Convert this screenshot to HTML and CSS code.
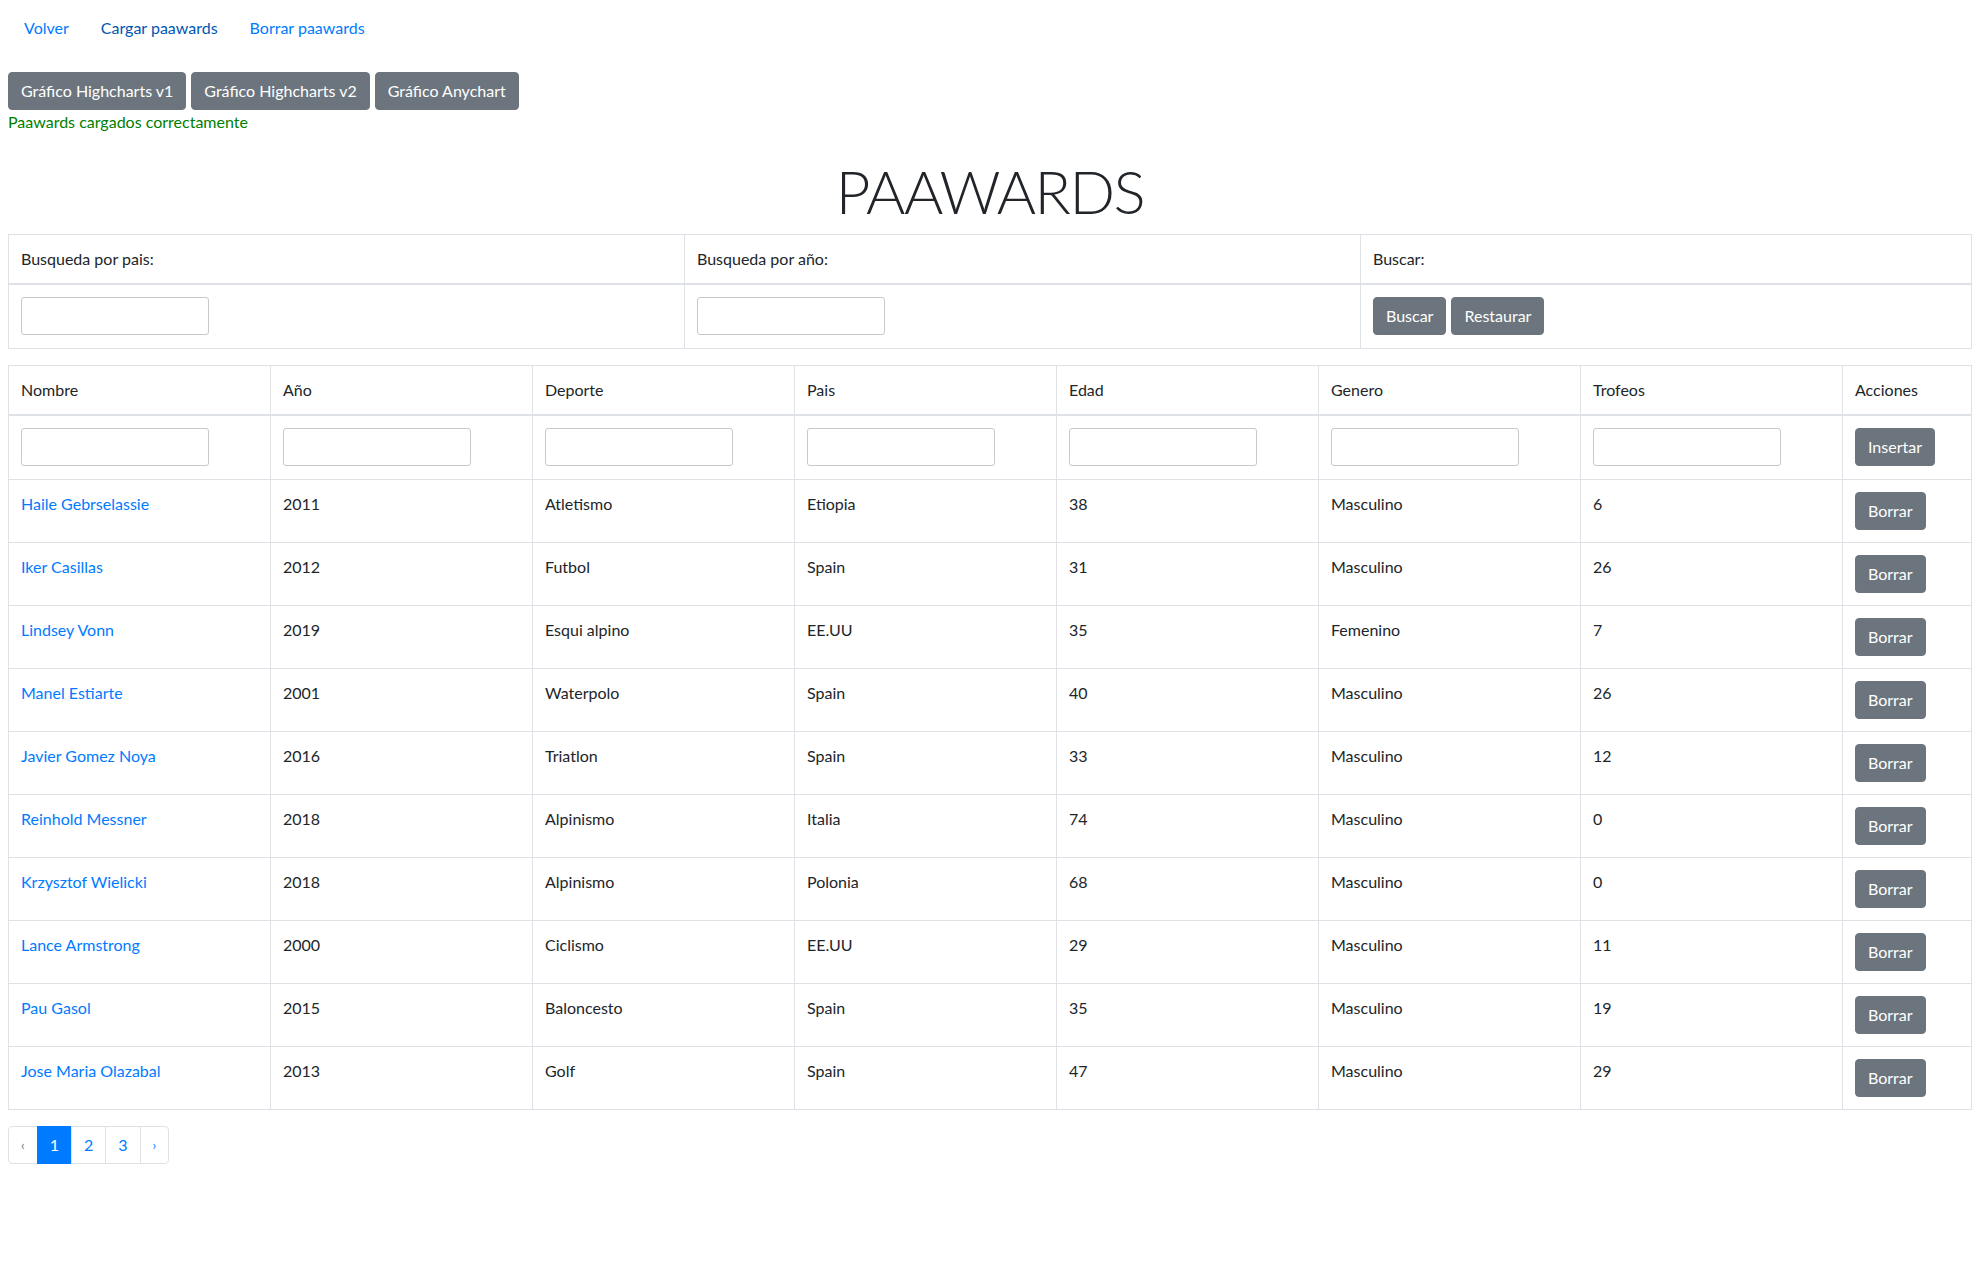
FILE: index.html
```html
<!DOCTYPE html>
<html lang="es">
<head>
<meta charset="utf-8">
<title>Paawards</title>
<link rel="stylesheet" href="styles.css">
</head>
<body>
<ul class="nav">
  <li><a class="nav-link" href="#">Volver</a></li>
  <li><a class="nav-link visited" href="#">Cargar paawards</a></li>
  <li><a class="nav-link" href="#">Borrar paawards</a></li>
</ul>
<div class="charts">
  <button class="btn">Gráfico Highcharts v1</button>
  <button class="btn">Gráfico Highcharts v2</button>
  <button class="btn">Gráfico Anychart</button>
</div>
<p class="msg">Paawards cargados correctamente</p>
<h1 class="title">PAAWARDS</h1>

<table class="tbl search">
  <colgroup><col class="sc1"><col class="sc2"><col></colgroup>
  <thead>
    <tr><th>Busqueda por pais:</th><th>Busqueda por año:</th><th>Buscar:</th></tr>
  </thead>
  <tbody>
    <tr class="input-row">
      <td><input class="inp" type="text"></td>
      <td><input class="inp" type="text"></td>
      <td><div class="btn-row"><button class="btn">Buscar</button><button class="btn">Restaurar</button></div></td>
    </tr>
  </tbody>
</table>

<table class="tbl data">
  <colgroup>
    <col class="dc"><col class="dc"><col class="dc"><col class="dc"><col class="dc"><col class="dc"><col class="dc"><col>
  </colgroup>
  <thead>
    <tr><th>Nombre</th><th>Año</th><th>Deporte</th><th>Pais</th><th>Edad</th><th>Genero</th><th>Trofeos</th><th>Acciones</th></tr>
  </thead>
  <tbody>
    <tr class="input-row">
      <td><input class="inp" type="text"></td>
      <td><input class="inp" type="text"></td>
      <td><input class="inp" type="text"></td>
      <td><input class="inp" type="text"></td>
      <td><input class="inp" type="text"></td>
      <td><input class="inp" type="text"></td>
      <td><input class="inp" type="text"></td>
      <td><button class="btn">Insertar</button></td>
    </tr>
    <tr><td><a href="#">Haile Gebrselassie</a></td><td>2011</td><td>Atletismo</td><td>Etiopia</td><td>38</td><td>Masculino</td><td>6</td><td><button class="btn">Borrar</button></td></tr>
    <tr><td><a href="#">Iker Casillas</a></td><td>2012</td><td>Futbol</td><td>Spain</td><td>31</td><td>Masculino</td><td>26</td><td><button class="btn">Borrar</button></td></tr>
    <tr><td><a href="#">Lindsey Vonn</a></td><td>2019</td><td>Esqui alpino</td><td>EE.UU</td><td>35</td><td>Femenino</td><td>7</td><td><button class="btn">Borrar</button></td></tr>
    <tr><td><a href="#">Manel Estiarte</a></td><td>2001</td><td>Waterpolo</td><td>Spain</td><td>40</td><td>Masculino</td><td>26</td><td><button class="btn">Borrar</button></td></tr>
    <tr><td><a href="#">Javier Gomez Noya</a></td><td>2016</td><td>Triatlon</td><td>Spain</td><td>33</td><td>Masculino</td><td>12</td><td><button class="btn">Borrar</button></td></tr>
    <tr><td><a href="#">Reinhold Messner</a></td><td>2018</td><td>Alpinismo</td><td>Italia</td><td>74</td><td>Masculino</td><td>0</td><td><button class="btn">Borrar</button></td></tr>
    <tr><td><a href="#">Krzysztof Wielicki</a></td><td>2018</td><td>Alpinismo</td><td>Polonia</td><td>68</td><td>Masculino</td><td>0</td><td><button class="btn">Borrar</button></td></tr>
    <tr><td><a href="#">Lance Armstrong</a></td><td>2000</td><td>Ciclismo</td><td>EE.UU</td><td>29</td><td>Masculino</td><td>11</td><td><button class="btn">Borrar</button></td></tr>
    <tr><td><a href="#">Pau Gasol</a></td><td>2015</td><td>Baloncesto</td><td>Spain</td><td>35</td><td>Masculino</td><td>19</td><td><button class="btn">Borrar</button></td></tr>
    <tr><td><a href="#">Jose Maria Olazabal</a></td><td>2013</td><td>Golf</td><td>Spain</td><td>47</td><td>Masculino</td><td>29</td><td><button class="btn">Borrar</button></td></tr>
  </tbody>
</table>

<ul class="pagination">
  <li><a class="page-link arrow disabled" href="#">‹</a></li>
  <li><a class="page-link active" href="#">1</a></li>
  <li><a class="page-link" href="#">2</a></li>
  <li><a class="page-link" href="#">3</a></li>
  <li><a class="page-link arrow" href="#">›</a></li>
</ul>
</body>
</html>
```

FILE: styles.css
```css
html, body {
  background: #fff;
}
body {
  margin: 8px;
  font-family: Lato, "Liberation Sans", sans-serif;
  font-size: 16px;
  line-height: 24px;
  color: #212529;
}
a {
  color: #007bff;
  text-decoration: none;
}
.nav {
  display: flex;
  list-style: none;
  margin: 0;
  padding: 0;
}
.nav-link {
  display: block;
  padding: 8px 16px;
}
.nav-link.visited {
  color: #0056b3;
}
.charts {
  display: flex;
  gap: 5px;
  margin-top: 24px;
}
.btn {
  display: inline-block;
  font-family: inherit;
  font-size: 16px;
  line-height: 24px;
  padding: 6px 12px;
  color: #fff;
  background: #6c757d;
  border: 1px solid #6c757d;
  border-radius: 4px;
  cursor: pointer;
  vertical-align: top;
}
.msg {
  margin: 0;
  color: #008000;
}
.title {
  margin: 21px 0 7px;
  text-align: center;
  font-size: 60px;
  line-height: 72px;
  letter-spacing: -1.5px;
  font-weight: 300;
  color: #212529;
}
.tbl {
  width: 100%;
  border-collapse: collapse;
  table-layout: fixed;
  margin-bottom: 16px;
}
.tbl th,
.tbl td {
  border: 1px solid #dee2e6;
  padding: 12px;
  vertical-align: top;
  text-align: left;
  font-weight: 400;
}
.tbl thead th {
  border-bottom: 2px solid #dee2e6;
}
.tbl .input-row td {
  padding-bottom: 13px;
}
.sc1, .sc2 {
  width: 676px;
}
.dc {
  width: 262px;
}
.inp {
  display: block;
  box-sizing: border-box;
  width: 188px;
  height: 38px;
  margin: 0;
  border: 1px solid #c8c8c8;
  border-radius: 3px;
  background: #fff;
  font-family: inherit;
  font-size: 16px;
}
.btn-row {
  display: flex;
  gap: 5px;
}
.pagination {
  display: flex;
  list-style: none;
  margin: 0;
  padding: 0;
}
.page-link {
  display: block;
  padding: 8px 12px;
  line-height: 20px;
  font-size: 16px;
  color: #007bff;
  background: #fff;
  border: 1px solid #dee2e6;
  margin-left: -1px;
}
.pagination li:first-child .page-link {
  margin-left: 0;
  border-radius: 4px 0 0 4px;
}
.pagination li:last-child .page-link {
  border-radius: 0 4px 4px 0;
}
.page-link.active {
  color: #fff;
  background: #007bff;
  border-color: #007bff;
}
.page-link.arrow {
  font-size: 13px;
}
.page-link.disabled {
  color: #6c757d;
}
```
